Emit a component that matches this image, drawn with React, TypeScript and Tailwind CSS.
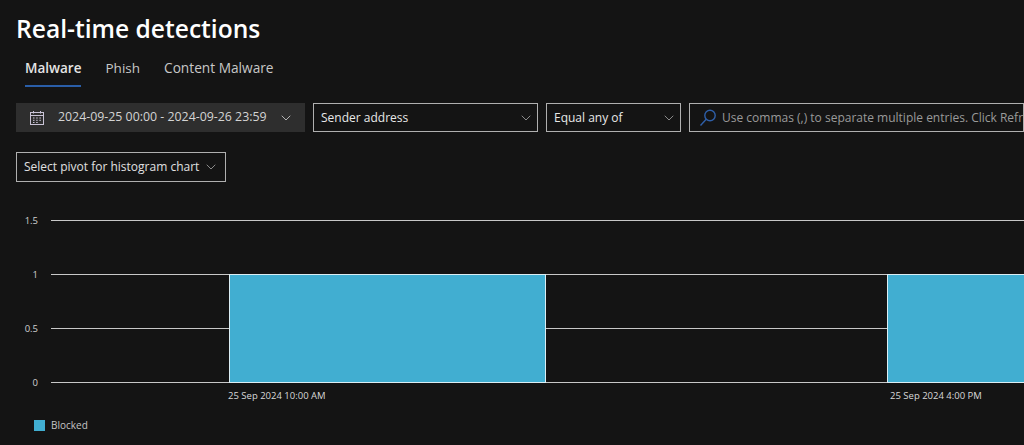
import React from "react";
import { ChevronDown } from "lucide-react";

const font = { fontFamily: '"Open Sans", "Noto Sans", sans-serif' };

const CalendarIcon = () => (
  <svg width="16" height="16" viewBox="0 0 16 16" fill="none" stroke="#c9c3d6" strokeWidth="1" className="shrink-0">
    <rect x="1.5" y="2.5" width="13" height="12" />
    <path d="M1.5 5.5h13M4.5 1v2.5M11.5 1v2.5" />
    <path d="M4 8h1.5M7.2 8h1.5M10.4 8h1.5M4 10.3h1.5M7.2 10.3h1.5M10.4 10.3h1.5M4 12.5h1.5M7.2 12.5h1.5" />
  </svg>
);

const SearchIcon = () => (
  <svg width="20" height="20" viewBox="0 0 20 20" fill="none" stroke="#2f5fa8" strokeWidth="1.4" className="shrink-0">
    <circle cx="12" cy="7.5" r="5.2" />
    <path d="M8.2 11.3 2.5 17.5" />
  </svg>
);

const Chart = () => {
  const ticks = [
    { label: "1.5", y: 15.5 },
    { label: "1", y: 69.5 },
    { label: "0.5", y: 123.5 },
    { label: "0", y: 177.5 },
  ];
  return (
    <svg width="1024" height="205" className="block">
      {ticks.map((t) => (
        <g key={t.label}>
          <line x1="51" x2="1024" y1={t.y} y2={t.y} stroke="#c8c8c8" strokeWidth="1" />
          <text x="38" y={t.y + 3.5} textAnchor="end" fontSize="9.5" fill="#d0d0d0">
            {t.label}
          </text>
        </g>
      ))}
      <rect x="229.5" y="69.5" width="316" height="108" fill="#41aed1" stroke="#dceef4" strokeWidth="1" />
      <rect x="887.5" y="69.5" width="140" height="108" fill="#41aed1" stroke="#dceef4" strokeWidth="1" />
      <text x="228" y="194" fontSize="9.5" fill="#d8d8d8">25 Sep 2024 10:00 AM</text>
      <text x="890" y="194" fontSize="9.5" fill="#d8d8d8">25 Sep 2024 4:00 PM</text>
    </svg>
  );
};

export default function App() {
  return (
    <div className="h-[445px] w-[1024px] overflow-hidden bg-[#141414] text-white" style={font}>
      <h1 className="pl-4 pt-[13px] text-[24.6px] leading-[32px] font-semibold text-white">Real-time detections</h1>

      <div className="mt-[7px] flex gap-6 pl-[25px] text-[13.5px] leading-[32px] text-[#c8c8c8]">
        <div className="relative h-[35px] font-semibold text-[#e4e4e4]">
          Malware
          <div className="absolute right-0 bottom-0 left-0 h-[2px] bg-[#2a5ea8]" />
        </div>
        <div>Phish</div>
        <div className="text-[13.7px]">Content Malware</div>
      </div>

      <div className="mt-[16px] flex h-[29px] gap-2 pl-4 text-[12px]">
        <div className="flex w-[289px] shrink-0 items-center bg-[#2e2e2e] pl-[13px] text-[#d4d4d4]">
          <CalendarIcon />
          <span className="ml-[13px] whitespace-nowrap text-[12.35px]">2024-09-25 00:00 - 2024-09-26 23:59</span>
          <ChevronDown className="ml-auto mr-[11px] h-4 w-4" strokeWidth={1.2} />
        </div>
        <div className="flex w-[225px] shrink-0 items-center justify-between border border-[#b0b0b0] pr-[3px] pl-[7px] text-[#e8e8e8]">
          <span>Sender address</span>
          <ChevronDown className="h-4 w-4 text-[#a8a8a8]" strokeWidth={1.2} />
        </div>
        <div className="flex w-[135px] shrink-0 items-center justify-between border border-[#b0b0b0] pr-[3px] pl-[7px] text-[#e8e8e8]">
          <span>Equal any of</span>
          <ChevronDown className="h-4 w-4 text-[#a8a8a8]" strokeWidth={1.2} />
        </div>
        <div className="flex flex-1 items-center overflow-hidden border border-[#b0b0b0] pl-2 whitespace-nowrap text-[#9a9a9a]">
          <SearchIcon />
          <span className="ml-[4px]">Use commas (,) to separate multiple entries. Click Refresh to apply</span>
        </div>
      </div>

      <div className="mt-5 pl-4">
        <div className="flex h-[30px] w-[210px] items-center justify-between border border-[#b0b0b0] pr-[6px] pl-[7px] text-[12px] text-[#e0e0e0]">
          <span className="whitespace-nowrap">Select pivot for histogram chart</span>
          <ChevronDown className="h-4 w-4 shrink-0 text-[#a8a8a8]" strokeWidth={1.2} />
        </div>
      </div>

      <div className="mt-[23px]">
        <Chart />
      </div>

      <div className="mt-[8px] flex items-center gap-[6px] pl-[34px] text-[10px] text-[#c4c4c4]">
        <div className="h-[11px] w-[11px] bg-[#41aed1]" />
        <span>Blocked</span>
      </div>
    </div>
  );
}
